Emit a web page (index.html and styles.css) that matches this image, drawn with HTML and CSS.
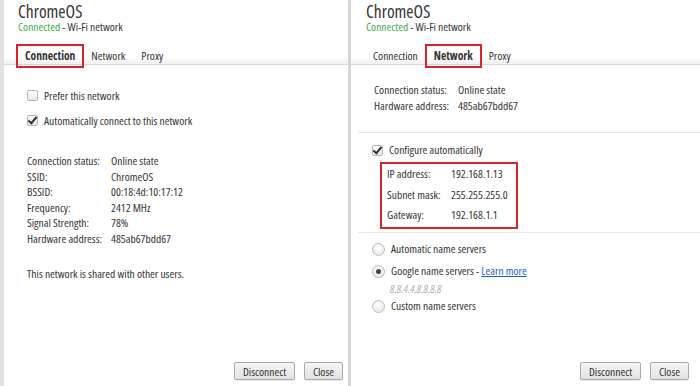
FILE: index.html
```html
<!DOCTYPE html>
<html lang="en">
<head>
    <meta charset="UTF-8">
    <meta name="viewport" content="width=device-width, initial-scale=1.0">
    <title>ChromeOS network details</title>
    <link rel="stylesheet" href="styles.css">
</head>
<body>
    <div class="screen">
        <!-- Connection tab -->
        <section class="panel panel-left">
            <header class="head">
                <h1>ChromeOS</h1>
                <p class="sub"><span class="ok">Connected</span> - Wi-Fi network</p>
            </header>
            <nav class="tabs">
                <span class="tab active marked">Connection</span>
                <span class="tab">Network</span>
                <span class="tab">Proxy</span>
            </nav>
            <div class="body body-conn">
                <div class="check-row"><span class="box"></span>Prefer this network</div>
                <div class="check-row"><span class="box checked"></span>Automatically connect to this network</div>

                <div class="info info-conn">
                    <span>Connection status:</span><span>Online state</span>
                    <span>SSID:</span><span>ChromeOS</span>
                    <span>BSSID:</span><span>00:18:4d:10:17:12</span>
                    <span>Frequency:</span><span>2412 MHz</span>
                    <span>Signal Strength:</span><span>78%</span>
                    <span>Hardware address:</span><span>485ab67bdd67</span>
                </div>

                <p class="shared">This network is shared with other users.</p>
            </div>
            <footer class="actions">
                <button class="btn btn-wide">Disconnect</button>
                <button class="btn">Close</button>
            </footer>
        </section>

        <div class="split"></div>

        <!-- Network tab -->
        <section class="panel panel-right">
            <header class="head">
                <h1>ChromeOS</h1>
                <p class="sub"><span class="ok">Connected</span> - Wi-Fi network</p>
            </header>
            <nav class="tabs">
                <span class="tab">Connection</span>
                <span class="tab active marked">Network</span>
                <span class="tab">Proxy</span>
            </nav>
            <div class="body body-net">
                <div class="info info-net">
                    <span>Connection status:</span><span>Online state</span>
                    <span>Hardware address:</span><span>485ab67bdd67</span>
                </div>

                <hr class="rule">

                <div class="check-row check-auto"><span class="box checked"></span>Configure automatically</div>
                <div class="ip-box">
                    <span>IP address:</span><span>192.168.1.13</span>
                    <span>Subnet mask:</span><span>255.255.255.0</span>
                    <span>Gateway:</span><span>192.168.1.1</span>
                </div>

                <hr class="rule rule-tight">

                <div class="radio-row radio-first"><span class="radio"></span>Automatic name servers</div>
                <div class="radio-row"><span class="radio on"></span>Google name servers -&nbsp;<a href="#" class="link">Learn more</a></div>
                <div class="dns">8.8.4.4,8.8.8.8</div>
                <div class="radio-row radio-last"><span class="radio"></span>Custom name servers</div>
            </div>
            <footer class="actions">
                <button class="btn btn-wide">Disconnect</button>
                <button class="btn">Close</button>
            </footer>
        </section>
    </div>
</body>
</html>
```

FILE: styles.css
```css
body {
    margin: 0;
    font-family: "Open Sans", "Noto Sans", Arial, sans-serif;
    font-size: 11.5px;
    font-stretch: 85%;
    color: #333;
    background: #fff;
}

.screen {
    display: flex;
    height: 386px;
    overflow: hidden;
}

.panel {
    display: flex;
    flex-direction: column;
    height: 386px;
    box-sizing: border-box;
}
.panel-left {
    width: 348px;
    border-left: 4px solid #e2e2e2;
}
.panel-right {
    flex: 1;
}
.split {
    width: 3px;
    background: #d6d6d6;
}

/* header */
.head {
    padding: 2px 0 0 14px;
}
.panel-right .head {
    padding-left: 15px;
}
.head h1 {
    margin: 0;
    font-size: 17.5px;
    font-weight: normal;
    line-height: 19px;
}
.sub {
    margin: 0;
    line-height: 12px;
}
.ok {
    color: #3daa4a;
}

/* tabs */
.tabs {
    display: flex;
    gap: 6px;
    padding: 15px 0 0 16px;
    border-bottom: 1px solid #d9d9d9;
    background: linear-gradient(to bottom, #fff 0, #fff 24px, #f3f3f3 29px);
}
.panel-right .tabs {
    padding-left: 17px;
}
.tab {
    padding: 0 5px;
    line-height: 16px;
}
.tab.active {
    font-weight: bold;
}
.tab.marked {
    outline: 2px solid #d8232a;
    outline-offset: 2px;
}

/* content */
.body {
    flex: 1;
}
.body-conn {
    padding: 18px 0 0 23px;
}
.body-net {
    padding: 17px 0 0 21px;
}

.check-row {
    display: flex;
    align-items: center;
    line-height: 25px;
}
.box {
    width: 9px;
    height: 9px;
    margin-right: 6px;
    border: 1px solid #b5b5b5;
    border-radius: 2px;
    background: linear-gradient(#fff, #e8e8e8);
    position: relative;
}
.box.checked::after {
    content: "";
    position: absolute;
    left: 2px;
    top: -1px;
    width: 3px;
    height: 7px;
    border: solid #333;
    border-width: 0 2px 2px 0;
    transform: rotate(40deg);
}

.info {
    display: grid;
    grid-template-columns: 84px auto;
    line-height: 15.5px;
}
.info-conn {
    margin-top: 20px;
}
.info-net {
    padding-left: 2px;
}

.shared {
    margin: 20px 0 0;
    line-height: 15.5px;
}

.rule {
    margin: 19px 0 0 -14px;
    border: 0;
    border-top: 1px solid #e6e6e6;
}
.rule-tight {
    margin-top: 3px;
}

.check-auto {
    margin-top: 7px;
    line-height: 20px;
}

.ip-box {
    display: grid;
    grid-template-columns: 64px auto;
    width: 129px;
    margin: 2px 0 0 8px;
    padding: 0 0 1.5px 5px;
    border: 2px solid #d8232a;
    line-height: 20.5px;
}

.radio-row {
    display: flex;
    align-items: center;
    line-height: 22px;
}
.radio-first {
    margin-top: 5px;
}
.radio-last {
    line-height: 20px;
}
.radio {
    width: 11px;
    height: 11px;
    margin-right: 6px;
    border: 1px solid #bcbcbc;
    border-radius: 50%;
    background: radial-gradient(circle at 50% 35%, #fff, #e4e4e4);
    position: relative;
}
.radio.on::after {
    content: "";
    position: absolute;
    left: 3px;
    top: 3px;
    width: 5px;
    height: 5px;
    border-radius: 50%;
    background: #444;
}
.link {
    color: #1a5fc9;
}
.dns {
    padding-left: 18px;
    line-height: 14px;
    font-style: italic;
    color: #b0b0b0;
}

/* buttons */
.actions {
    display: flex;
    justify-content: flex-end;
    gap: 9px;
    padding: 0 5px 6px 0;
}
.panel-right .actions {
    padding-right: 11px;
}
.btn {
    height: 18px;
    width: 39px;
    padding: 0;
    font: inherit;
    color: #333;
    border: 1px solid #aaa;
    border-radius: 2px;
    background: linear-gradient(#f6f6f6, #e2e2e2);
    box-shadow: 0 1px 1px rgba(0, 0, 0, 0.08);
}
.btn-wide {
    width: 61px;
}
```
